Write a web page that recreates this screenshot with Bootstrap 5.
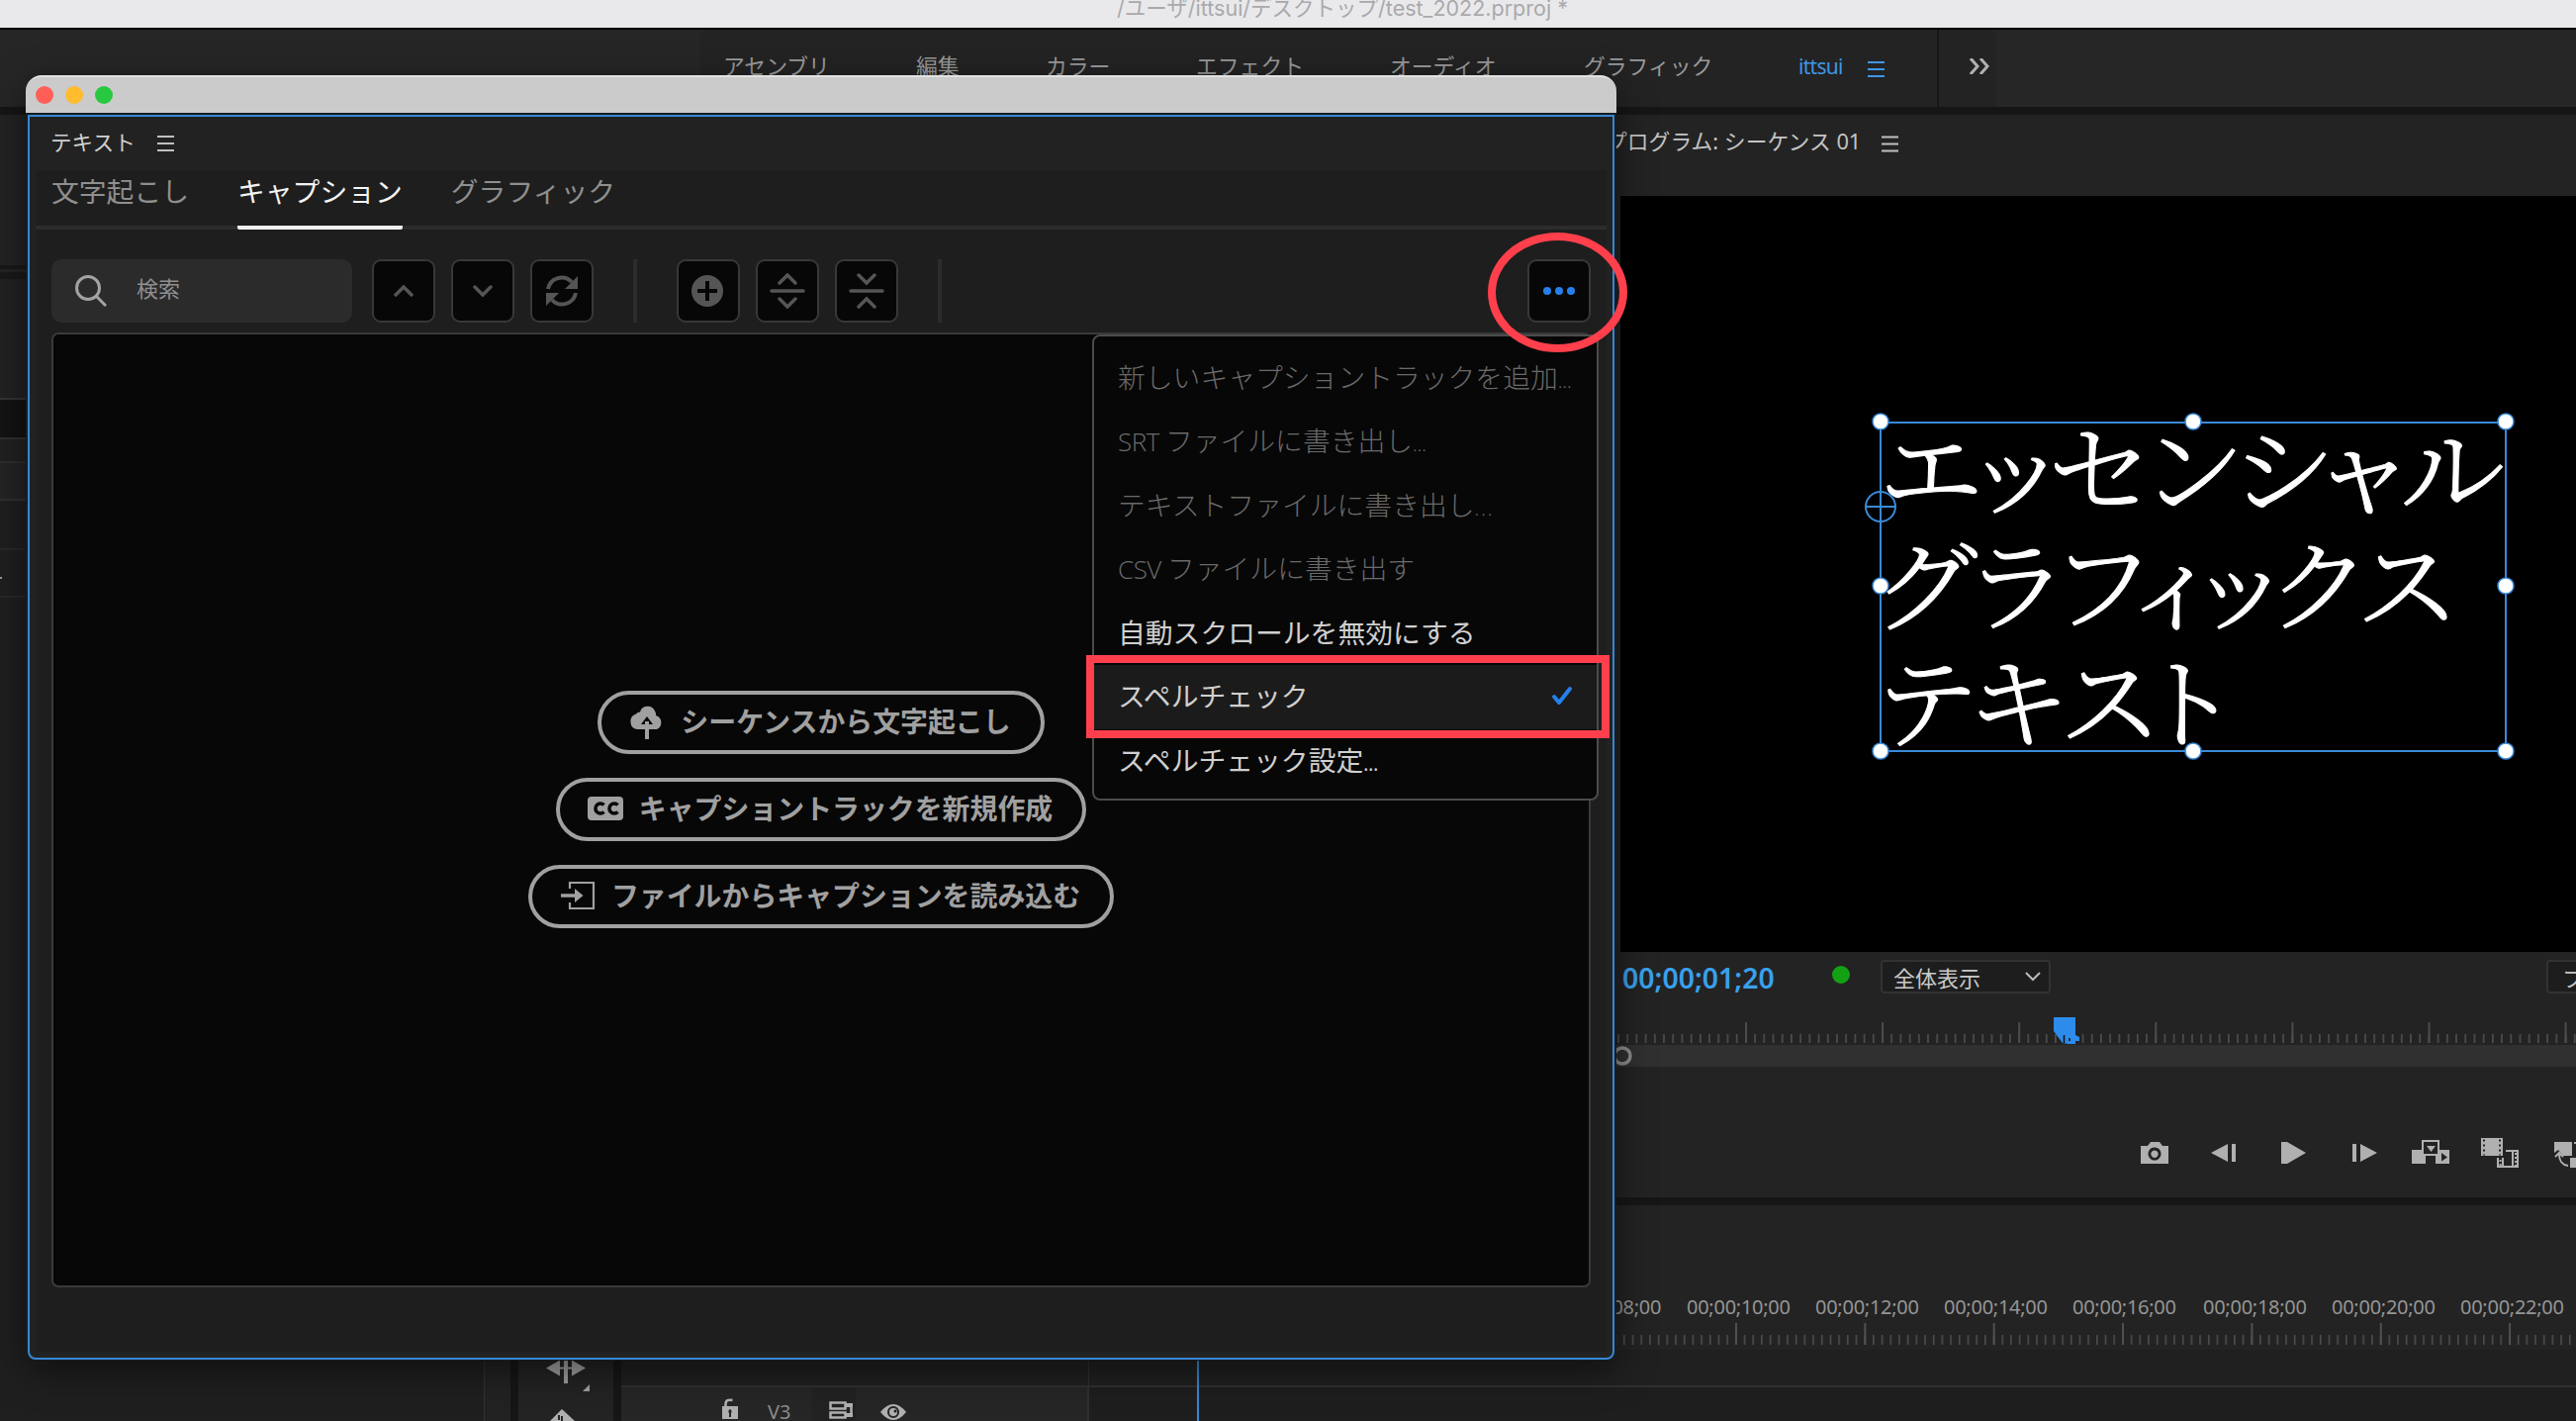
<!DOCTYPE html>
<html lang="ja">
<head>
<meta charset="utf-8">
<title>test_2022.prproj</title>
<link href="https://cdn.jsdelivr.net/npm/bootstrap@5.3.0/dist/css/bootstrap.min.css" rel="stylesheet">
<style>
html,body{height:100%}
body{width:2604px;height:1436px;overflow:hidden;background:#161616;color:#c4c4c4;font-family:"Noto Sans","Noto Sans CJK JP",sans-serif;font-size:22px;line-height:1.2}
.jp{font-family:"Noto Sans CJK JP",sans-serif}
svg{display:block;flex:none}
.app-title{height:30px;background:#e9e9eb;border-bottom:2px solid #000;color:#a9a9ab;font-family:Inter,"Noto Sans CJK JP",sans-serif;font-size:21.5px;line-height:28px;padding-left:1129px;white-space:nowrap}
.app-title span{display:block;margin-top:-6px}
.spaces{height:78px;background:linear-gradient(90deg,#262626 708px,#232323 708px 2018px,#262626 2018px);margin-bottom:8px;padding-left:731px;color:#9a9a9a;font-size:21.8px}
.spaces .jp{height:30px;margin-top:23px;white-space:nowrap}
.sp-current{color:#3d97e6;margin-top:25px;width:140px;font-size:21px;letter-spacing:-.7px}
.sp-current span{width:70px}
.sp-more{border-left:2px solid #161616;padding:29px 0 0 31px}
.left-col{width:516px;flex:none;background:#1f1f1f;margin-right:8px;border-right:26px solid #222}
.left-col>div{flex:none}
.right-col{width:2080px;flex:none}
.tools-col{width:96px;flex:none;background:#232323;margin-right:8px}
.prog{height:1094px;flex:none;background:#232323;margin-bottom:8px;overflow:hidden}
.prog-head{height:82px;padding:14px 0 0 1099px;color:#c4c4c4;font-size:21.8px}
.monitor{height:764px;background:#000;margin-left:1114px}
.under{height:66px;padding-left:1116px}
.under>div{flex:none}
.tc{color:#39a0ec;font-weight:600;font-size:28.4px;width:212px;line-height:1;padding-top:12px}
.live{width:18px;height:18px;border-radius:50%;background:#14a014;margin:14px 31px 0 0}
.pick{width:172px;height:34px;border:2px solid #323232;border-radius:4px;background:#1d1d1d;margin-top:8px;padding:0 8px 0 11px;font-size:22px;color:#c8c8c8}
.pick2{margin-left:501px;padding-left:14px;width:60px}
.lower{height:218px;flex:none}
.tl{background:#1e1e1e}
.tl-ruler{height:146px;background:#232323}
.tl-gap{height:38px;background:#202020;border-bottom:2px solid #303030}
.tl-head{width:473px;height:34px;background:#262626;border-right:2px solid #303030}
/* floating text panel */
.win{position:absolute;left:26px;top:76px;width:1608px;height:1299px;border-radius:16px 16px 10px 10px;background:#161c22;box-shadow:0 10px 36px rgba(0,0,0,.5)}
.win-bar{height:38px;background:#cbcbcb;border-top:2px solid #e2e2e2;border-radius:16px 16px 0 0;padding-left:10px;gap:12px}
.win-bar i{width:18px;height:18px;border-radius:50%}
.win-body{height:1258px;margin:2px 2px 0;border:2px solid #3787d2;border-radius:0 0 8px 8px;background:#222}
.win-title{height:54px;padding:12px 0 0 21px;color:#cfcfcf;font-size:21.6px}
.win-in{height:1194px;margin:0 6px;background:#1e1e1e}
.win-tabs{height:60px;border-bottom:4px solid #2c2c2c;padding-left:16px;gap:49px;font-size:27.8px;color:#8f8f8f}
.win-tabs span{height:60px;line-height:40px;white-space:nowrap}
.win-tabs .on{color:#f4f4f4;border-bottom:4px solid #f0f0f0;border-radius:2px}
.tools{padding:30px 16px 0;height:104px}
.find{width:304px;height:64px;border-radius:10px;background:#2b2b2b;color:#8f8f8f;font-size:22px;padding-left:24px;gap:30px;margin-right:20px}
.tbtn{width:64px;height:64px;border:2px solid #383838;border-radius:9px;background:#070707;padding:0;display:flex;align-items:center;justify-content:center;margin-right:16px}
.vr-line{width:4px;height:64px;background:#2c2c2c}
.stage{height:965px;margin:0 16px;border:2px solid #3a3a3a;border-radius:7px;background:#070707;gap:24px;padding-top:360px}
.pill{height:64px;border:4px solid #a0a0a0;border-radius:32px;color:#a0a0a0;background:none;font-size:27.9px;font-weight:700;line-height:1;padding:0 30px 2px 28px;gap:16px;display:flex;align-items:center}
.drop{position:absolute;left:1104px;top:338px;width:512px;height:471px;border:2px solid #4b4b4b;border-radius:8px;background:#070707;padding:9px 0;font-size:27.8px;color:#cfcfcf}
.drop .it{height:64.6px;padding:0 24px 3px;display:flex;align-items:center;justify-content:space-between;white-space:nowrap}
.drop .off{color:#6a6a6a;font-weight:300;padding-bottom:1px}
.drop .sel{background:#1b1b1b}
.drop .el{font-family:"Noto Sans",sans-serif;font-size:19px}
.drop .lat{font-family:"Open Sans",sans-serif;font-size:26px;letter-spacing:-.5px}
.mark-box{position:absolute;left:1098px;top:662px;width:529px;height:84px;border:8px solid #ff404c}
.mark-ring{position:absolute;left:1504px;top:235px;width:141px;height:121px;border:8px solid #ff404c;border-radius:50%}
</style>
</head>
<body class="d-flex flex-column">
<header class="app-title flex-shrink-0"><span>/ユーザ/ittsui/デスクトップ/test_2022.prproj *</span></header>
<nav class="spaces d-flex flex-shrink-0">
  <div class="jp" style="width:195px">アセンブリ</div>
  <div class="jp" style="width:131px">編集</div>
  <div class="jp" style="width:152px">カラー</div>
  <div class="jp" style="width:196px">エフェクト</div>
  <div class="jp" style="width:196px">オーディオ</div>
  <div class="jp" style="width:217px">グラフィック</div>
  <div class="sp-current d-flex"><span>ittsui</span><svg width="17" height="26"><path d="M0 8h17M0 15h17M0 22h17" stroke="#3d97e6" stroke-width="2"/></svg></div>
  <div class="sp-more"><svg width="20" height="16" fill="none" stroke="#b0b0b0" stroke-width="3"><path d="M1 0l7 8-7 8M11 0l7 8-7 8"/></svg></div>
</nav>
<main class="d-flex flex-grow-1">
  <section class="left-col d-flex flex-column">
    <div style="height:152px;background:#232323"></div>
    <div style="height:4px;background:#191919"></div><div style="height:3px;background:#242424"></div><div style="height:7px;background:#191919"></div>
    <div style="height:120px;background:#222"></div>
    <div style="height:2px;background:#343434"></div><div style="height:38px;background:#131313"></div><div style="height:2px;background:#303030"></div>
    <div style="height:22px;background:#212121"></div><div style="height:2px;background:#2e2e2e"></div><div style="height:36px;background:#242424"></div>
    <div style="height:2px;background:#303030"></div><div style="height:48px"></div><div style="height:2px;background:#282828"></div>
    <div style="height:46px;padding-top:27px"><div style="width:2px;height:2px;background:#999"></div></div><div style="height:2px;background:#282828"></div>
    <div class="flex-grow-1 border-end" style="border-color:#333!important"></div>
  </section>
  <div class="right-col d-flex flex-column">
    <section class="prog d-flex flex-column">
      <div class="prog-head d-flex"><span class="text-nowrap" style="width:279px">プログラム: シーケンス 01</span><svg width="17" height="26"><path d="M0 8.500h17M0 15.500h17M0 22.500h17" stroke="#c0c0c0" stroke-width="2"/></svg></div>
      <div class="monitor">
        <svg width="966" height="764" viewBox="1638 198 966 764">
          <g fill="#fff" stroke="#fff" stroke-width="1" font-family="'Noto Serif CJK JP','Noto Serif JP','Noto Sans CJK JP',serif" font-weight="300" font-size="101" style="font-feature-settings:'palt'">
            <text x="1900" y="513" textLength="632" lengthAdjust="spacingAndGlyphs">エッセンシャル</text>
            <text x="1899" y="630" textLength="581" lengthAdjust="spacingAndGlyphs">グラフィックス</text>
            <text x="1899" y="748" textLength="352" lengthAdjust="spacingAndGlyphs">テキスト</text>
          </g>
          <g fill="none" stroke="#3a8ad8" stroke-width="2"><rect x="1901" y="427" width="632" height="332"/><circle cx="1901" cy="512" r="15"/><path d="M1886 512h30"/></g>
          <g fill="#fff" stroke="#3a8ad8" stroke-width="1.5"><circle cx="1901" cy="426" r="8"/><circle cx="2217" cy="426" r="8"/><circle cx="2533" cy="426" r="8"/><circle cx="1901" cy="592" r="8"/><circle cx="2533" cy="592" r="8"/><circle cx="1901" cy="759" r="8"/><circle cx="2217" cy="759" r="8"/><circle cx="2533" cy="759" r="8"/></g>
        </svg>
      </div>
      <div class="under d-flex">
        <div class="tc">00;00;01;20</div><div class="live"></div>
        <div class="pick jp d-flex align-items-center justify-content-between"><span>全体表示</span><svg width="16" height="10" fill="none" stroke="#bbb" stroke-width="2"><path d="M1 1l7 7 7-7"/></svg></div>
        <div class="pick pick2 jp d-flex align-items-center"><span>フ</span></div>
      </div>
      <svg width="2080" height="50" viewBox="524 1028 2080 50">
        <defs>
          <pattern id="mi" x="1764" y="1045" width="9.207" height="40" patternUnits="userSpaceOnUse"><rect width="1.7" height="10" fill="#4c4c4c"/></pattern>
          <pattern id="ma" x="1764" y="1033" width="138.1" height="40" patternUnits="userSpaceOnUse"><rect width="2" height="22" fill="#4c4c4c"/></pattern>
        </defs>
        <rect x="1632" y="1045" width="972" height="9" fill="url(#mi)"/><rect x="1632" y="1033" width="972" height="21" fill="url(#ma)"/>
        <rect x="1632" y="1056" width="972" height="22" fill="#303030"/>
        <circle cx="1640" cy="1067" r="8" fill="#303030" stroke="#8c8c8c" stroke-width="3.5"/>
        <path d="M2076 1028h22v18l4 2v4h-4v3h-7l-6-1-9-12z" fill="#2d8ceb"/><path d="M2086.500 1046v8M2092 1049v3" stroke="#111" stroke-width="1.500"/>
      </svg>
      <svg width="2080" height="40" viewBox="524 1148 2080 40" style="margin-top:70px" fill="#b0b0b0">
        <path fill-rule="evenodd" d="M2164 1158h7l3-4h9l3 4h6v18h-28zM2178 1159.500a6.500 6.500 0 1 0 .01 0zM2178 1162.500a3.700 3.700 0 1 1-.01 0z"/>
        <path d="M2235 1165l17-9v18zM2256 1156h4v18h-4zM2306 1154h6l19 11-19 11h-6zM2378 1156h4v18h-4zM2386 1156l17 9-17 9z"/>
        <path d="M2438 1162h10v6h4v8h-14zM2466 1162h10v14h-14v-8h4z"/><path d="M2449 1153h16v14h-16z" fill="#232323" stroke="#b0b0b0" stroke-width="2"/><path d="M2453 1158h9l-4.500 6z"/><path d="M2468 1165l6 4.500-6 4z" fill="#232323"/>
        <path d="M2508 1150h22v18h-22z"/><path d="M2511 1151.500v16M2527 1151.500v16" stroke="#232323" stroke-width="2" stroke-dasharray="2 3"/>
        <path d="M2533 1163h12v16h-20v-9M2540 1163v16M2530 1170v9" fill="none" stroke="#b0b0b0" stroke-width="2"/><path d="M2543 1165v13M2527.500 1172v6" stroke="#b0b0b0" stroke-width="2" stroke-dasharray="2 2"/>
        <path d="M2582 1154h18v14h-9l-5-6-4 3zM2598 1170h6v10h-6zM2602 1154h2v2h-2z"/><path d="M2596 1178c-6-1-9-4-9-12M2583 1169l4-4 4 4" fill="none" stroke="#b0b0b0" stroke-width="2"/>
      </svg>
    </section>
    <section class="lower d-flex">
      <div class="tools-col"><svg width="96" height="218" viewBox="524 1218 96 218" fill="#a0a0a0"><path d="M552 1382.500l14-8v16zM592 1382.500l-14-8v16zM570 1370h4v28h-4z"/><path d="M562 1382.500h20" stroke="#a0a0a0" stroke-width="2"/><path d="M596 1399v7h-7z"/><path fill="#b0b0b0" d="M556 1436l12-12 13 12z"/><path d="M565 1430v5M568 1431v5" stroke="#232323" stroke-width="2"/></svg></div>
      <div class="tl flex-grow-1">
        <div class="tl-ruler"><svg width="1976" height="146" viewBox="628 1218 1976 146">
          <defs>
            <pattern id="mi2" x="1754" y="1349" width="8.69" height="40" patternUnits="userSpaceOnUse"><rect width="1.6" height="10" fill="#4c4c4c"/></pattern>
            <pattern id="ma2" x="1754" y="1337" width="130.350" height="40" patternUnits="userSpaceOnUse"><rect width="2" height="22" fill="#505050"/></pattern>
          </defs>
          <rect x="1632" y="1349" width="972" height="10" fill="url(#mi2)"/><rect x="1632" y="1337" width="972" height="22" fill="url(#ma2)"/>
          <g fill="#959595" font-size="20" text-anchor="middle"><text x="1627" y="1328" textLength="105">00;00;08;00</text><text x="1757.500" y="1328" textLength="105">00;00;10;00</text><text x="1887.500" y="1328" textLength="105">00;00;12;00</text><text x="2017.500" y="1328" textLength="105">00;00;14;00</text><text x="2147.500" y="1328" textLength="105">00;00;16;00</text><text x="2279.500" y="1328" textLength="105">00;00;18;00</text><text x="2409.500" y="1328" textLength="105">00;00;20;00</text><text x="2539.500" y="1328" textLength="105">00;00;22;00</text></g>
        </svg></div>
        <div class="tl-gap"></div>
        <div class="tl-head"><svg width="471" height="34" viewBox="628 1402 471 34" fill="#b0b0b0">
          <path d="M821 1402h44v34h-44z" fill="#222"/>
          <path fill-rule="evenodd" d="M730 1421h16v13h-16zM738 1424a2.500 2.500 0 0 0-1 4v4h2v-4a2.500 2.500 0 0 0-1-4z"/><path d="M733.500 1421v-2c0-4 3-5 7-4" fill="none" stroke="#b0b0b0" stroke-width="2.500"/>
          <text x="776" y="1434" font-size="20" fill="#8a8a8a">V3</text>
          <path d="M839.500 1417.500h15v6h-15zM839.500 1427.500h15v5h-15zM855 1419.500h5.500v10.500h-5.500" fill="none" stroke="#b0b0b0" stroke-width="2.500"/><path d="M855 1418h7v4h-7zM855 1428h7v4h-7z"/>
          <path fill-rule="evenodd" d="M890 1427q13-16 26 0q-13 16-26 0zM903 1421a6 6 0 1 0 .01 0z"/><circle cx="903" cy="1427" r="4"/><circle cx="905" cy="1426" r="1.500" fill="#222"/>
        </svg></div>
      </div>
    </section>
  </div>
</main>
<div class="position-absolute" style="left:1210px;top:1364px;width:2px;height:72px;background:#3787d2"></div>
<div class="position-absolute" style="left:1100px;top:1364px;width:1px;height:38px;background:#303030"></div>

<div class="win">
  <div class="win-bar d-flex align-items-center"><i style="background:#ff5f57"></i><i style="background:#febc2e"></i><i style="background:#28c840"></i></div>
  <div class="win-body">
    <div class="win-title jp d-flex"><span style="width:108px">テキスト</span><svg width="17" height="26"><path d="M0 8h17M0 15h17M0 22h17" stroke="#c0c0c0" stroke-width="2"/></svg></div>
    <div class="win-in">
      <div class="win-tabs jp d-flex"><span>文字起こし</span><span class="on">キャプション</span><span>グラフィック</span></div>
      <div class="tools d-flex">
        <div class="find jp d-flex align-items-center"><svg width="32" height="34" fill="none" stroke="#a3a3a3" stroke-width="3"><circle cx="13" cy="14" r="11.500"/><path d="M21 22l10 10"/></svg><span style="padding-bottom:7px">検索</span></div>
        <button class="tbtn"><svg width="20" height="14" fill="none" stroke="#555" stroke-width="3.500" stroke-linecap="round"><path d="M2 11l8-8 8 8"/></svg></button>
        <button class="tbtn"><svg width="20" height="14" fill="none" stroke="#555" stroke-width="3.500" stroke-linecap="round"><path d="M2 3l8 8 8-8"/></svg></button>
        <button class="tbtn me-0"><svg width="34" height="34" fill="none" stroke="#555" stroke-width="4"><path d="M3 15A14 14 0 0 1 27 8M31 19A14 14 0 0 1 7 26"/><path d="M33 2v13H20zM1 32V19h13z" fill="#555" stroke="none"/></svg></button>
        <div class="vr-line" style="margin:0 40px"></div>
        <button class="tbtn"><svg width="32" height="32" style="margin-right:2px"><circle cx="16" cy="16" r="16" fill="#555"/><path d="M16 6v20M6 16h20" stroke="#070707" stroke-width="4"/></svg></button>
        <button class="tbtn"><svg width="36" height="36" fill="none" stroke="#555" stroke-width="3.500" stroke-linecap="round"><path d="M10 10l8-8 8 8M10 26l8 8 8-8M2 18h32"/></svg></button>
        <button class="tbtn me-0"><svg width="36" height="36" fill="none" stroke="#555" stroke-width="3.500" stroke-linecap="round"><path d="M10 2l8 8 8-8M10 34l8-8 8 8M2 18h32"/></svg></button>
        <div class="vr-line" style="margin-left:40px"></div>
        <button class="tbtn ms-auto me-0"><svg width="34" height="8" fill="#2680eb"><circle cx="5" cy="4" r="4"/><circle cx="17" cy="4" r="4"/><circle cx="29" cy="4" r="4"/></svg></button>
      </div>
      <div class="stage d-flex flex-column align-items-center">
        <button class="pill jp"><svg width="36" height="36" viewBox="0 0 36 36"><path fill="#a0a0a0" d="M8 26a8 8 0 0 1-1-15.500a6 6 0 0 1 4-2a8 8 0 0 1 15-1q1.500 2.500 1 4.500a7.500 7.500 0 0 1 1 14h-8v-5h4l-6-8-6 8h4v5zM16 18h4v18h-4z"/></svg><span>シーケンスから文字起こし</span></button>
        <button class="pill jp"><svg width="36" height="24" viewBox="0 0 36 24"><rect width="36" height="24" rx="4" fill="#a0a0a0"/><path d="M16.500 8.500a5 5 0 1 0 0 7M30.500 8.500a5 5 0 1 0 0 7" fill="none" stroke="#070707" stroke-width="3.500"/></svg><span>キャプショントラックを新規作成</span></button>
        <button class="pill jp"><svg width="36" height="30" viewBox="0 0 36 30"><path d="M10 8V2h24v26H10v-6" fill="none" stroke="#a0a0a0" stroke-width="2.200"/><path d="M1 13.300h14V8l8.500 7-8.500 7v-5.300H1z" fill="#a0a0a0"/></svg><span>ファイルからキャプションを読み込む</span></button>
      </div>
    </div>
  </div>
</div>
<div class="drop jp">
  <div class="it off"><span>新しいキャプショントラックを追加<span class="el">…</span></span></div>
  <div class="it off"><span><span class="lat">SRT</span> ファイルに書き出し<span class="el">…</span></span></div>
  <div class="it off"><span>テキストファイルに書き出し<span class="el" style="letter-spacing:2px">...</span></span></div>
  <div class="it off"><span><span class="lat">CSV</span> ファイルに書き出す</span></div>
  <div class="it"><span>自動スクロールを無効にする</span></div>
  <div class="it sel"><span>スペルチェック</span><svg width="22" height="20" fill="none" stroke="#2680eb" stroke-width="4" stroke-linecap="round" stroke-linejoin="round"><path d="M3 11l5 6L19 3"/></svg></div>
  <div class="it"><span>スペルチェック設定<span class="el">…</span></span></div>
</div>
<div class="mark-box"></div>
<div class="mark-ring"></div>
<script src="https://cdn.jsdelivr.net/npm/bootstrap@5.3.0/dist/js/bootstrap.bundle.min.js"></script>
</body>
</html>
